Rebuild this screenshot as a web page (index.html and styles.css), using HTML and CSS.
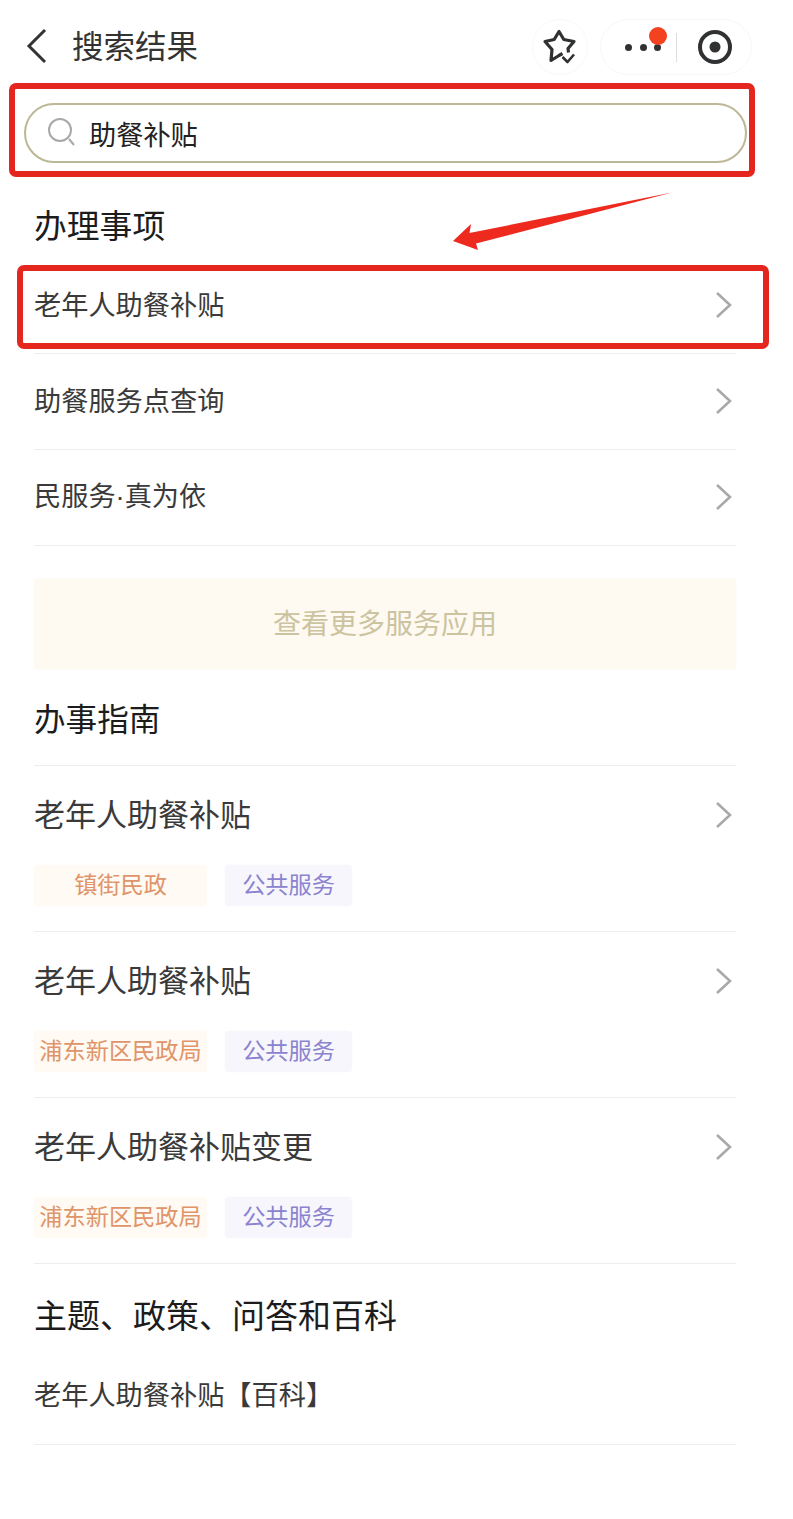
FILE: index.html
```html
<!DOCTYPE html>
<html lang="zh">
<head>
	<meta charset="UTF-8">
	<meta name="viewport" content="width=device-width, initial-scale=1.0">
	<title>搜索结果</title>
	<link rel="stylesheet" href="styles.css">
</head>
<body>
	<div class="page">
		<div class="nav">
			<svg class="back" width="22" height="36" viewBox="0 0 22 36"><path d="M19 2 L3 18 L19 34" /></svg>
			<div class="navTitle">搜索结果</div>
			<div class="capsule starCapsule">
				<svg width="34" height="36" viewBox="0 0 34 36"><path class="starLine" d="M25.5 23.5 L25 19.5 L31 12.5 L20.8 10.5 L16 2.5 L11.2 10.5 L2 12.5 L9 20.5 L8 31.5 L16 26.5 L19.5 24.5" /><path class="starLine thin" d="M19.5 28 L24.5 33 L31 25.5" /></svg>
			</div>
			<div class="capsule menuCapsule">
				<div class="dots"><i></i><i></i><i></i><b></b></div>
				<div class="capLine"></div>
				<svg width="36" height="36" viewBox="0 0 36 36"><circle class="ring" cx="18" cy="18" r="15" /><circle cx="18" cy="18" r="5.5" fill="#2f3133" /></svg>
			</div>
		</div>

		<div class="search">
			<svg width="30" height="30" viewBox="0 0 30 30"><circle cx="13" cy="13" r="11" class="searchIcon" /><path d="M22 22 L27 28" class="searchIcon" /></svg>
			<span>助餐补贴</span>
		</div>

		<div class="content">
			<div class="secTitle">办理事项</div>
			<div class="row"><span>老年人助餐补贴</span><svg class="arrow" width="18" height="28" viewBox="0 0 18 28"><path d="M2 2 L15 14 L2 26" /></svg></div>
			<div class="row"><span>助餐服务点查询</span><svg class="arrow" width="18" height="28" viewBox="0 0 18 28"><path d="M2 2 L15 14 L2 26" /></svg></div>
			<div class="row"><span>民服务<span class="midDot">·</span>真为依</span><svg class="arrow" width="18" height="28" viewBox="0 0 18 28"><path d="M2 2 L15 14 L2 26" /></svg></div>

			<div class="moreBtn">查看更多服务应用</div>

			<div class="secTitle guideTitle">办事指南</div>
			<div class="guide">
				<div class="guideHead"><span>老年人助餐补贴</span><svg class="arrow" width="18" height="28" viewBox="0 0 18 28"><path d="M2 2 L15 14 L2 26" /></svg></div>
				<div class="tags"><span class="tag orange">镇街民政</span><span class="tag purple">公共服务</span></div>
			</div>
			<div class="guide">
				<div class="guideHead"><span>老年人助餐补贴</span><svg class="arrow" width="18" height="28" viewBox="0 0 18 28"><path d="M2 2 L15 14 L2 26" /></svg></div>
				<div class="tags"><span class="tag orange">浦东新区民政局</span><span class="tag purple">公共服务</span></div>
			</div>
			<div class="guide">
				<div class="guideHead"><span>老年人助餐补贴变更</span><svg class="arrow" width="18" height="28" viewBox="0 0 18 28"><path d="M2 2 L15 14 L2 26" /></svg></div>
				<div class="tags"><span class="tag orange">浦东新区民政局</span><span class="tag purple">公共服务</span></div>
			</div>

			<div class="secTitle topicTitle">主题、政策、问答和百科</div>
			<div class="row lastRow"><span>老年人助餐补贴【百科】</span></div>
		</div>

		<!-- red marks drawn over the screenshot -->
		<div class="mark markSearch"></div>
		<div class="mark markRow"></div>
		<svg class="markArrow" width="225" height="62" viewBox="0 0 225 62"><path d="M221 0.5 L18.5 41 L20 32 L2 49 L27 58 L25 51.5 Z" /></svg>
	</div>
</body>
</html>
```

FILE: styles.css
```css
*{padding: 0;margin: 0;box-sizing: border-box;}
body{
	background: #fff;
	font-family: "Noto Sans CJK SC", "Noto Sans", sans-serif;
	color: #333;
}
.page{
	width: 793px;
	height: 1519px;
	position: relative;
	overflow: hidden;
}
.nav{
	height: 92px;
	display: flex;
	align-items: center;
	padding-left: 26px;
}
.back{
	margin-right: 24px;
}
.back path{
	fill: none;
	stroke: #333;
	stroke-width: 3;
}
.navTitle{
	font-size: 31.5px;
	color: #333;
	flex: 1;
	padding-bottom: 4px;
}
.capsule{
	height: 56px;
	border: 1px solid #f8f8f8;
	border-radius: 28px;
	display: flex;
	align-items: center;
	margin-top: 2px;
}
.starCapsule{
	width: 56px;
	justify-content: center;
	margin-right: 12px;
}
.starLine{
	fill: none;
	stroke: #2f3133;
	stroke-width: 3.2;
	stroke-linejoin: round;
}
.thin{
	stroke-width: 2.6;
}
.menuCapsule{
	width: 152px;
	margin-right: 41px;
	padding-left: 24px;
}
.dots{
	width: 36px;
	display: flex;
	justify-content: space-between;
	position: relative;
}
.dots i{
	width: 7px;
	height: 7px;
	border-radius: 50%;
	background: #2f3133;
}
.dots b{
	width: 18px;
	height: 18px;
	border-radius: 50%;
	background: #f2421f;
	position: absolute;
	right: -6px;
	top: -17px;
}
.capLine{
	width: 1px;
	height: 29px;
	background: #ddd;
	margin-left: 15px;
	margin-right: 20px;
}
.ring{
	fill: none;
	stroke: #2f3133;
	stroke-width: 4;
}
.search{
	height: 60px;
	margin: 11px 46px 31px 24px;
	border: 2px solid #bcb896;
	border-radius: 30px;
	display: flex;
	align-items: center;
	padding-left: 21px;
	font-size: 27.2px;
	color: #222;
}
.search svg{
	margin-right: 12px;
	margin-top: -3px;
}
.searchIcon{
	fill: none;
	stroke: #a8a8a8;
	stroke-width: 2;
}
.content{
	padding: 0 57px 0 34px;
}
.secTitle{
	height: 64px;
	padding-bottom: 6px;
	display: flex;
	align-items: center;
	font-size: 32.8px;
	color: #1c1c1c;
}
.row{
	height: 96px;
	border-bottom: 1px solid #eee;
	padding-bottom: 2px;
	display: flex;
	align-items: center;
	justify-content: space-between;
	font-size: 27.2px;
	color: #3a3a3a;
	line-height: 44px;
}
.row > span{
	margin-top: -3px;
}
.midDot{
	font-family: "Liberation Sans", sans-serif;
}
.arrow{
	margin-right: 3px;
}
.arrow path{
	fill: none;
	stroke: #a9a9a9;
	stroke-width: 2.6;
}
.moreBtn{
	height: 90px;
	margin-top: 33px;
	background: #fef9f1;
	box-shadow: 0 0 2px #fef9f1;
	display: flex;
	align-items: center;
	justify-content: center;
	font-size: 28px;
	color: #ccc4a0;
	padding-bottom: 4px;
}
.guideTitle{
	height: 97px;
	padding-bottom: 1px;
	border-bottom: 1px solid #eee;
	font-size: 31.6px;
}
.guide{
	height: 166px;
	border-bottom: 1px solid #eee;
	padding-top: 26px;
}
.guideHead{
	height: 46px;
	display: flex;
	align-items: center;
	justify-content: space-between;
	font-size: 31px;
	color: #3a3a3a;
	line-height: 40px;
}
.guideHead > span{
	margin-top: -4px;
}
.tags{
	display: flex;
	gap: 18px;
	margin-top: 27px;
}
.tag{
	height: 41px;
	display: flex;
	align-items: center;
	justify-content: center;
	font-size: 23.2px;
	border-radius: 4px;
	padding-bottom: 5px;
}
.orange{
	width: 173px;
	background: #fffaf3;
	box-shadow: 0 0 2px #fffaf3;
	color: #e0946a;
}
.purple{
	width: 127px;
	background: #f7f6fc;
	box-shadow: 0 0 2px #f7f6fc;
	color: #8a83cf;
}
.topicTitle{
	height: 84px;
	padding-top: 18px;
	padding-bottom: 2px;
	font-size: 33px;
}
.lastRow{
	height: 97px;
	padding-bottom: 3px;
}
.mark{
	position: absolute;
	border: 6px solid #e5261f;
	border-radius: 7px;
}
.markSearch{
	left: 9px;
	top: 83px;
	width: 746px;
	height: 94px;
}
.markRow{
	left: 17px;
	top: 265px;
	width: 752px;
	height: 84px;
}
.markArrow{
	position: absolute;
	left: 451px;
	top: 192px;
}
.markArrow path{
	fill: #ee2a1f;
}
```
